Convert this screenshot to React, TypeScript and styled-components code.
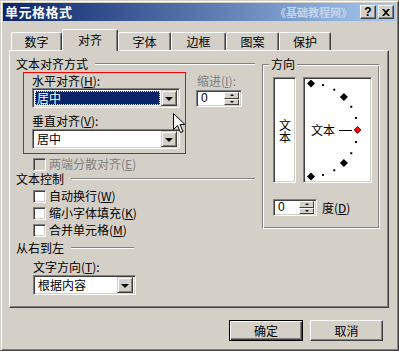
import React from "react";
import styled, { createGlobalStyle } from "styled-components";

const FACE = "#d4d0c8";
const SHADOW = "#808080";
const DARK = "#404040";
const FONT = `"Noto Sans CJK SC", "Noto Sans", sans-serif`;

const GlobalStyle = createGlobalStyle`
  html, body {
    margin: 0;
    padding: 0;
    background: ${FACE};
  }
  body {
    font-family: ${FONT};
    font-size: 12px;
  }
`;

const rad = (deg: number) => (deg * Math.PI) / 180;

const Dial: React.FC = () => {
  const cx = 5;
  const cy = 50;
  const r = 46.5;
  const marks = [];
  for (let a = 90; a >= -90; a -= 15) {
    const x = cx + r * Math.cos(rad(a));
    const y = cy - r * Math.sin(rad(a));
    if (a === 0) {
      marks.push(
        <polygon
          key={a}
          points={`${x},${y - 3.5} ${x + 3.5},${y} ${x},${y + 3.5} ${x - 3.5},${y}`}
          fill="#ff0000"
          stroke="#600000"
          strokeWidth="0.8"
        />
      );
    } else if (a % 45 === 0) {
      marks.push(
        <polygon
          key={a}
          points={`${x},${y - 4} ${x + 4},${y} ${x},${y + 4} ${x - 4},${y}`}
          fill="#000"
        />
      );
    } else {
      marks.push(<rect key={a} x={x - 1} y={y - 1} width="2" height="2" fill="#000" />);
    }
  }
  return (
    <svg width="65" height="102" viewBox="0 0 65 102">
      <text x="5" y="55" fontFamily={FONT} fontSize="12" fill="#000">
        文本
      </text>
      <line x1="33" y1="50.5" x2="46" y2="50.5" stroke="#000" strokeWidth="1" />
      {marks}
    </svg>
  );
};

const Cursor: React.FC = () => (
  <CursorWrap>
    <svg width="13" height="21" viewBox="0 0 13 21">
      <path
        d="M0.5 0.5 L0.5 16.5 L4.5 12.5 L7.5 19.5 L10 18.5 L7 11.5 L12 11.5 Z"
        fill="#fff"
        stroke="#000"
        strokeWidth="1"
        strokeLinejoin="miter"
      />
    </svg>
  </CursorWrap>
);

const Combo: React.FC<{ value: string; width: number; active?: boolean }> = ({
  value,
  width,
  active,
}) => (
  <ComboBox width={width}>
    <ComboValue active={active}>{value}</ComboValue>
    <DropButton>
      <Arrow />
    </DropButton>
  </ComboBox>
);

const Spinner: React.FC<{ value: string; width: number }> = ({ value, width }) => (
  <SpinBox width={width}>
    <SpinValue>{value}</SpinValue>
    <SpinButtons>
      <SpinButton>
        <SmallArrow up />
      </SpinButton>
      <SpinButton>
        <SmallArrow />
      </SpinButton>
    </SpinButtons>
  </SpinBox>
);

const Check: React.FC<{ label: React.ReactNode; disabled?: boolean }> = ({
  label,
  disabled,
}) => (
  <CheckRow disabled={disabled}>
    <CheckBox disabled={disabled} />
    <span>{label}</span>
  </CheckRow>
);

const tabs = ["数字", "对齐", "字体", "边框", "图案", "保护"];
const tabWidths = [51, 56, 53, 55, 53, 52];

const App: React.FC = () => {
  return (
    <Window>
      <GlobalStyle />
      <TitleBar>
        <TitleText>单元格格式</TitleText>
        <Watermark>《基础教程网》</Watermark>
        <CaptionButton>?</CaptionButton>
        <CaptionButton close>
          <svg width="8" height="7" viewBox="0 0 8 7">
            <path d="M0 0 L2 0 L4 2 L6 0 L8 0 L5 3.5 L8 7 L6 7 L4 5 L2 7 L0 7 L3 3.5 Z" fill="#000" />
          </svg>
        </CaptionButton>
      </TitleBar>

      <TabRow>
        {tabs.map((t, i) => (
          <Tab key={t} width={tabWidths[i]} selected={i === 1}>
            {t}
          </Tab>
        ))}
      </TabRow>

      <Panel>
        <LeftColumn>
          <SectionHeader>
            <span>文本对齐方式</span>
          </SectionHeader>
          <AlignRow>
            <RedBox>
              <FieldLabel>
                水平对齐(<u>H</u>):
              </FieldLabel>
              <ComboIndent>
                <Combo value="居中" width={148} active />
              </ComboIndent>
              <FieldLabel gap={5}>
                垂直对齐(<u>V</u>):
              </FieldLabel>
              <ComboIndent gap={1}>
                <Combo value="居中" width={148} />
              </ComboIndent>
            </RedBox>
            <IndentBlock>
              <DisabledLabel>
                缩进(<u>I</u>):
              </DisabledLabel>
              <Spinner value="0" width={46} />
            </IndentBlock>
          </AlignRow>
          <Check
            disabled
            label={
              <>
                两端分散对齐(<u>E</u>)
              </>
            }
          />
          <SectionHeader gap={1}>
            <span>文本控制</span>
          </SectionHeader>
          <CheckList>
            <Check
              label={
                <>
                  自动换行(<u>W</u>)
                </>
              }
            />
            <Check
              label={
                <>
                  缩小字体填充(<u>K</u>)
                </>
              }
            />
            <Check
              label={
                <>
                  合并单元格(<u>M</u>)
                </>
              }
            />
          </CheckList>
          <SectionHeader gap={4} width={118}>
            <span>从右到左</span>
          </SectionHeader>
          <SubLabel>
            文字方向(<u>T</u>):
          </SubLabel>
          <ComboIndent gap={1} left={17}>
            <Combo value="根据内容" width={103} />
          </ComboIndent>
        </LeftColumn>

        <GroupBox>
          <GroupTitle>方向</GroupTitle>
          <OrientRow>
            <VerticalBox>
              <VerticalText>文本</VerticalText>
            </VerticalBox>
            <DialBox>
              <Dial />
            </DialBox>
          </OrientRow>
          <DegreeRow>
            <Spinner value="0" width={44} />
            <DegreeLabel>
              度(<u>D</u>)
            </DegreeLabel>
          </DegreeRow>
        </GroupBox>
      </Panel>

      <ButtonRow>
        <PushButton width={74} isDefault>
          确定
        </PushButton>
        <PushButton width={73}>取消</PushButton>
      </ButtonRow>

      <Cursor />
    </Window>
  );
};

export default App;

const Window = styled.div`
  position: relative;
  box-sizing: border-box;
  width: 399px;
  height: 351px;
  padding: 2px;
  background: ${FACE};
  border: 1px solid;
  border-color: ${FACE} ${DARK} ${DARK} ${FACE};
  box-shadow: inset 1px 1px #fff, inset -1px -1px ${SHADOW};
  overflow: hidden;
  font-family: ${FONT};
  font-size: 12px;
  color: #000;
`;

const TitleBar = styled.div`
  height: 18px;
  display: flex;
  align-items: center;
  padding: 0 2px 0 2px;
  background: linear-gradient(to right, #0a246a, #a6caf0);
`;

const TitleText = styled.div`
  flex: 1;
  color: #fff;
  font-weight: bold;
  font-size: 13px;
  letter-spacing: 0.5px;
  line-height: 18px;
`;

const Watermark = styled.div`
  margin-right: 8px;
  color: #c4d6ee;
  font-weight: bold;
  font-size: 11px;
  line-height: 18px;
`;

const CaptionButton = styled.div<{ close?: boolean }>`
  box-sizing: border-box;
  width: 16px;
  height: 14px;
  margin-left: ${(p) => (p.close ? "2px" : "0")};
  display: flex;
  align-items: center;
  justify-content: center;
  background: ${FACE};
  border: 1px solid;
  border-color: #fff ${DARK} ${DARK} #fff;
  box-shadow: inset -1px -1px ${SHADOW};
  font-family: "Liberation Sans", sans-serif;
  font-weight: bold;
  font-size: 12px;
  line-height: 12px;
`;

const TabRow = styled.div`
  display: flex;
  align-items: flex-end;
  height: 21px;
  margin-top: 8px;
  padding-left: 8px;
  position: relative;
  z-index: 1;
`;

const Tab = styled.div<{ width: number; selected?: boolean }>`
  box-sizing: border-box;
  width: ${(p) => p.width}px;
  height: ${(p) => (p.selected ? 22 : 18)}px;
  margin-bottom: ${(p) => (p.selected ? -1 : 0)}px;
  display: flex;
  align-items: center;
  justify-content: center;
  padding-bottom: ${(p) => (p.selected ? 2 : 0)}px;
  background: ${FACE};
  border-left: 1px solid #fff;
  border-top: 1px solid #fff;
  border-right: 1px solid ${DARK};
  border-radius: 2px 2px 0 0;
  box-shadow: inset -1px 0 ${SHADOW};
  line-height: 14px;
`;

const Panel = styled.div`
  box-sizing: border-box;
  display: flex;
  width: 380px;
  height: 258px;
  margin-left: 6px;
  padding: 6px 0 0 6px;
  border: 1px solid;
  border-color: #fff ${DARK} ${DARK} #fff;
  box-shadow: inset -1px -1px ${SHADOW};
`;

const LeftColumn = styled.div`
  width: 239px;
  display: flex;
  flex-direction: column;
`;

const SectionHeader = styled.div<{ gap?: number; width?: number }>`
  display: flex;
  align-items: center;
  height: 14px;
  margin-top: ${(p) => p.gap ?? 0}px;
  width: ${(p) => (p.width ? `${p.width}px` : "auto")};
  line-height: 14px;
  white-space: nowrap;

  &::after {
    content: "";
    flex: 1;
    margin-left: 7px;
    border-top: 1px solid ${SHADOW};
    border-bottom: 1px solid #fff;
  }
`;

const AlignRow = styled.div`
  display: flex;
  margin-top: 1px;
`;

const RedBox = styled.div`
  box-sizing: border-box;
  width: 163px;
  height: 82px;
  margin-left: 7px;
  border: 1px solid #ff0000;
  display: flex;
  flex-direction: column;
`;

const FieldLabel = styled.div<{ gap?: number }>`
  height: 15px;
  line-height: 15px;
  padding-left: 8px;
  margin-top: ${(p) => p.gap ?? 0}px;
  white-space: nowrap;
`;

const ComboIndent = styled.div<{ gap?: number; left?: number }>`
  margin-top: ${(p) => p.gap ?? 0}px;
  padding-left: ${(p) => p.left ?? 8}px;
`;

const ComboBox = styled.div<{ width: number }>`
  box-sizing: border-box;
  width: ${(p) => p.width}px;
  height: 20px;
  display: flex;
  align-items: center;
  padding: 2px;
  background: #fff;
  border: 1px solid;
  border-color: ${SHADOW} #fff #fff ${SHADOW};
  box-shadow: inset 1px 1px ${DARK}, inset -1px -1px ${FACE};
`;

const ComboValue = styled.div<{ active?: boolean }>`
  box-sizing: border-box;
  flex: 1;
  height: 14px;
  margin: 0 1px 0 0;
  padding-left: 2px;
  line-height: 13px;
  color: ${(p) => (p.active ? "#fff" : "#000")};
  background: ${(p) => (p.active ? "#0a246a" : "transparent")};
  outline: ${(p) => (p.active ? "1px dotted #f5e6a0" : "none")};
  outline-offset: -1px;
`;

const DropButton = styled.div`
  box-sizing: border-box;
  width: 16px;
  height: 16px;
  display: flex;
  align-items: center;
  justify-content: center;
  background: ${FACE};
  border: 1px solid;
  border-color: ${FACE} ${DARK} ${DARK} ${FACE};
  box-shadow: inset 1px 1px #fff, inset -1px -1px ${SHADOW};
`;

const Arrow = styled.div`
  width: 0;
  height: 0;
  border-left: 4px solid transparent;
  border-right: 4px solid transparent;
  border-top: 4px solid #000;
  margin-top: 1px;
`;

const IndentBlock = styled.div`
  margin-left: 10px;
  padding-top: 1px;
  display: flex;
  flex-direction: column;
`;

const DisabledLabel = styled.div`
  height: 15px;
  line-height: 15px;
  margin-left: 1px;
  color: ${SHADOW};
  white-space: nowrap;
`;

const SpinBox = styled.div<{ width: number }>`
  box-sizing: border-box;
  width: ${(p) => p.width}px;
  height: 17px;
  margin-top: 2px;
  display: flex;
  align-items: center;
  padding: 2px;
  background: #fff;
  border: 1px solid;
  border-color: ${SHADOW} #fff #fff ${SHADOW};
  box-shadow: inset 1px 1px ${DARK}, inset -1px -1px ${FACE};
`;

const SpinValue = styled.div`
  flex: 1;
  padding-left: 2px;
  line-height: 13px;
  font-family: "Liberation Sans", sans-serif;
  font-size: 12px;
`;

const SpinButtons = styled.div`
  display: flex;
  flex-direction: column;
  width: 15px;
  height: 13px;
`;

const SpinButton = styled.div`
  box-sizing: border-box;
  flex: 1;
  display: flex;
  align-items: center;
  justify-content: center;
  background: ${FACE};
  border: 1px solid;
  border-color: #fff ${DARK} ${DARK} #fff;
`;

const SmallArrow = styled.div<{ up?: boolean }>`
  width: 0;
  height: 0;
  border-left: 2px solid transparent;
  border-right: 2px solid transparent;
  ${(p) => (p.up ? "border-bottom: 2px solid #000;" : "border-top: 2px solid #000;")}
`;

const CheckRow = styled.div<{ disabled?: boolean }>`
  display: flex;
  align-items: center;
  height: 14px;
  margin-top: 3px;
  padding-left: 17px;
  line-height: 14px;
  white-space: nowrap;
  color: ${(p) => (p.disabled ? SHADOW : "#000")};

  span {
    margin-left: 3px;
  }
`;

const CheckBox = styled.div<{ disabled?: boolean }>`
  box-sizing: border-box;
  width: 13px;
  height: 13px;
  background: ${(p) => (p.disabled ? FACE : "#fff")};
  border: 1px solid;
  border-color: ${SHADOW} #fff #fff ${SHADOW};
  box-shadow: inset 1px 1px ${DARK}, inset -1px -1px ${FACE};
`;

const CheckList = styled.div`
  display: flex;
  flex-direction: column;
`;

const SubLabel = styled.div`
  height: 15px;
  line-height: 15px;
  margin-top: 4px;
  padding-left: 17px;
  white-space: nowrap;
`;

const GroupBox = styled.div`
  position: relative;
  box-sizing: border-box;
  width: 118px;
  height: 165px;
  margin-top: 7px;
  margin-left: 7px;
  padding: 12px 0 0 10px;
  border: 1px solid;
  border-color: ${SHADOW} #fff #fff ${SHADOW};
  box-shadow: inset 1px 1px #fff, inset -1px -1px ${SHADOW};
`;

const GroupTitle = styled.div`
  position: absolute;
  top: -8px;
  left: 6px;
  padding: 0 2px;
  background: ${FACE};
  line-height: 14px;
`;

const OrientRow = styled.div`
  display: flex;
`;

const sunken = `
  box-sizing: border-box;
  background: #fff;
  border: 1px solid;
  border-color: ${SHADOW} #fff #fff ${SHADOW};
  box-shadow: inset 1px 1px ${DARK}, inset -1px -1px ${FACE};
`;

const VerticalBox = styled.div`
  ${sunken}
  width: 23px;
  height: 106px;
  display: flex;
  align-items: center;
  justify-content: center;
  padding-top: 2px;
`;

const VerticalText = styled.div`
  writing-mode: vertical-rl;
  text-orientation: upright;
  line-height: 14px;
`;

const DialBox = styled.div`
  ${sunken}
  width: 69px;
  height: 106px;
  margin-left: 7px;
  padding: 2px;
  svg {
    display: block;
  }
`;

const DegreeRow = styled.div`
  display: flex;
  align-items: center;
  margin-top: 14px;
`;

const DegreeLabel = styled.div`
  margin-left: 5px;
  margin-top: 2px;
  line-height: 15px;
`;

const ButtonRow = styled.div`
  display: flex;
  justify-content: flex-end;
  gap: 7px;
  margin-top: 12px;
  padding-right: 13px;
`;

const PushButton = styled.div<{ width: number; isDefault?: boolean }>`
  box-sizing: border-box;
  width: ${(p) => p.width}px;
  height: 21px;
  display: flex;
  align-items: center;
  justify-content: center;
  background: ${FACE};
  line-height: 14px;
  border: 1px solid;
  ${(p) =>
    p.isDefault
      ? `border-color: #000;
         box-shadow: inset 1px 1px #fff, inset -1px -1px ${DARK}, inset -2px -2px ${SHADOW};`
      : `border-color: #fff ${DARK} ${DARK} #fff;
         box-shadow: inset -1px -1px ${SHADOW};`}
`;

const CursorWrap = styled.div`
  position: absolute;
  left: 172px;
  top: 112px;
  pointer-events: none;
  svg {
    display: block;
  }
`;
